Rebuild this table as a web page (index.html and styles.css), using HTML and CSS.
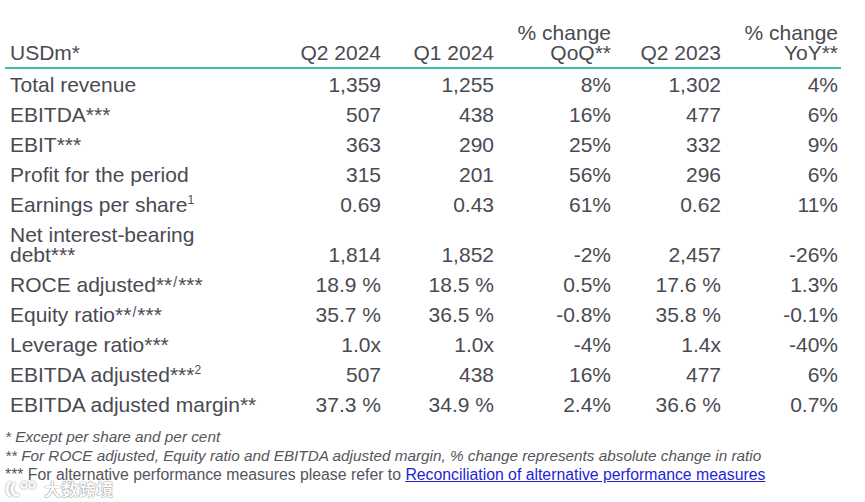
FILE: index.html
```html
<!DOCTYPE html>
<html lang="en">
<head>
<meta charset="utf-8">
<title>Key figures</title>
<link rel="stylesheet" href="styles.css">
</head>
<body>
<div class="page">
  <table class="kpi">
    <colgroup>
      <col class="c-label"><col class="c-q2"><col class="c-q1"><col class="c-qoq"><col class="c-q23"><col class="c-yoy">
    </colgroup>
    <thead>
      <tr>
        <th class="label">USDm*</th>
        <th>Q2 2024</th>
        <th>Q1 2024</th>
        <th>% change<br>QoQ**</th>
        <th>Q2 2023</th>
        <th>% change<br>YoY**</th>
      </tr>
    </thead>
    <tbody>
      <tr><td class="label">Total revenue</td><td>1,359</td><td>1,255</td><td>8%</td><td>1,302</td><td>4%</td></tr>
      <tr><td class="label">EBITDA***</td><td>507</td><td>438</td><td>16%</td><td>477</td><td>6%</td></tr>
      <tr><td class="label">EBIT***</td><td>363</td><td>290</td><td>25%</td><td>332</td><td>9%</td></tr>
      <tr><td class="label">Profit for the period</td><td>315</td><td>201</td><td>56%</td><td>296</td><td>6%</td></tr>
      <tr><td class="label">Earnings per share<sup>1</sup></td><td>0.69</td><td>0.43</td><td>61%</td><td>0.62</td><td>11%</td></tr>
      <tr><td class="label">Net interest-bearing<br>debt***</td><td>1,814</td><td>1,852</td><td>-2%</td><td>2,457</td><td>-26%</td></tr>
      <tr><td class="label">ROCE adjusted**<span class="sl">/</span>***</td><td>18.9 %</td><td>18.5 %</td><td>0.5%</td><td>17.6 %</td><td>1.3%</td></tr>
      <tr><td class="label">Equity ratio**<span class="sl">/</span>***</td><td>35.7 %</td><td>36.5 %</td><td>-0.8%</td><td>35.8 %</td><td>-0.1%</td></tr>
      <tr><td class="label">Leverage ratio***</td><td>1.0x</td><td>1.0x</td><td>-4%</td><td>1.4x</td><td>-40%</td></tr>
      <tr><td class="label">EBITDA adjusted***<sup>2</sup></td><td>507</td><td>438</td><td>16%</td><td>477</td><td>6%</td></tr>
      <tr><td class="label">EBITDA adjusted margin**</td><td>37.3 %</td><td>34.9 %</td><td>2.4%</td><td>36.6 %</td><td>0.7%</td></tr>
    </tbody>
  </table>
  <div class="notes">
    <p class="note">* Except per share and per cent</p>
    <p class="note">** For ROCE adjusted, Equity ratio and EBITDA adjusted margin, % change represents absolute change in ratio</p>
    <p class="ref">*** For alternative performance measures please refer to <a href="#">Reconciliation of alternative performance measures </a></p>
  </div>
  <div class="watermark">
    <svg class="wm-logo" width="34" height="20" viewBox="0 0 34 20"><path d="M7 3 C2 5 2 15 7 17 M11 4 C7 7 7 13 11 16 L15 16" fill="none" stroke="#fff" stroke-width="2.4"/><circle cx="20" cy="6" r="2.8" fill="none" stroke="#fff" stroke-width="1.8"/><circle cx="28" cy="6" r="2.8" fill="none" stroke="#fff" stroke-width="1.8"/></svg>
    <span class="wm-text">大数跨境</span>
  </div>
</div>
</body>
</html>
```

FILE: styles.css
```css
html, body {
  margin: 0;
  padding: 0;
  background: #ffffff;
}

.page {
  position: relative;
  width: 865px;
  height: 502px;
  padding: 0 0 0 5px;
  box-sizing: border-box;
  font-family: "Liberation Sans", Arial, sans-serif;
  color: #4a4a52;
  overflow: hidden;
}

.kpi {
  border-collapse: collapse;
  table-layout: fixed;
  width: 836px;
  margin-top: 23px;
  font-size: 21px;
  line-height: 20px;
}

.c-label { width: 286px; }
.c-q2 { width: 93px; }
.c-q1 { width: 113px; }
.c-qoq { width: 117px; }
.c-q23 { width: 110px; }
.c-yoy { width: 117px; }

.kpi th {
  font-weight: normal;
  text-align: right;
  vertical-align: bottom;
  padding: 0 3px 4px 0;
  border-bottom: 2px solid #3dbfa6;
}

.kpi td {
  text-align: right;
  vertical-align: bottom;
  padding: 6px 3px 4px 0;
}

.kpi .label {
  text-align: left;
  padding-left: 5px;
}

.kpi sup {
  font-size: 12px;
  line-height: 0;
  vertical-align: 8px;
}

.kpi .sl {
  font-size: 14px;
  vertical-align: 5px;
  line-height: 0;
  padding: 0 1px;
}

.notes {
  margin-top: 8px;
  line-height: 19px;
  color: #55555c;
}

.notes p {
  margin: 0;
}

.note {
  font-style: italic;
  font-size: 15.3px;
}

.ref {
  font-size: 15.8px;
}

.ref a {
  color: #1f1fd6;
  text-decoration: underline;
}

.watermark {
  position: absolute;
  left: 4px;
  top: 479px;
  display: flex;
  align-items: center;
  gap: 6px;
}

.wm-logo {
  filter: drop-shadow(0 0 1px rgba(0,0,0,0.45));
}

.wm-text {
  font-family: "Noto Sans CJK SC", sans-serif;
  font-size: 17px;
  font-weight: bold;
  color: #ffffff;
  line-height: 20px;
  text-shadow: 0 0 1px rgba(0,0,0,0.55), 0 0 1px rgba(0,0,0,0.4);
  letter-spacing: 0.5px;
}
```
